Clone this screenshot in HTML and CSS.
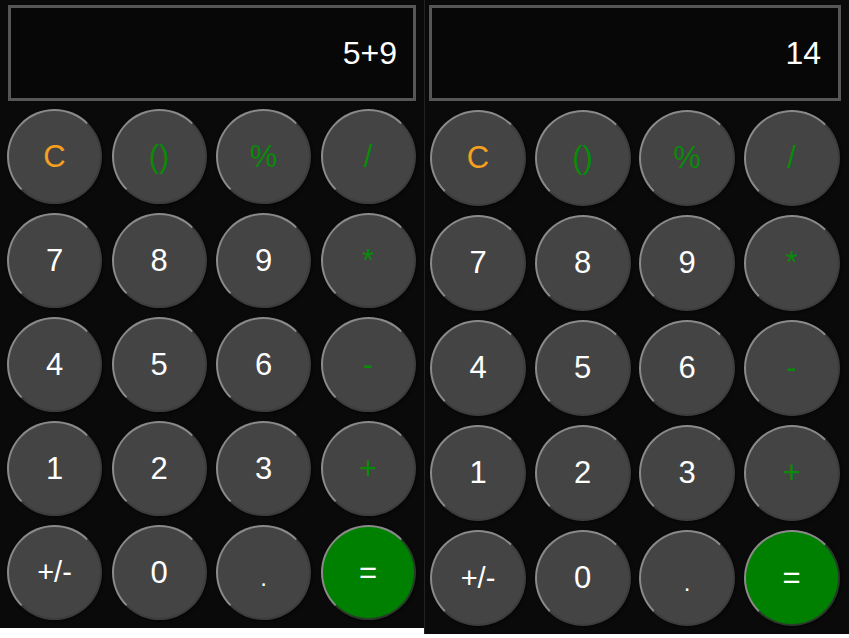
FILE: index.html
```html
<!DOCTYPE html>
<html lang="en">
<head>
<meta charset="utf-8">
<title>Calculator</title>
<link rel="stylesheet" href="styles.css">
</head>
<body>
<div class="shots">
  <section class="calc calc-left">
    <div class="display">5+9</div>
    <div class="keys">
      <button class="key clear">C</button>
      <button class="key op">()</button>
      <button class="key op">%</button>
      <button class="key op">/</button>
      <button class="key">7</button>
      <button class="key">8</button>
      <button class="key">9</button>
      <button class="key op">*</button>
      <button class="key">4</button>
      <button class="key">5</button>
      <button class="key">6</button>
      <button class="key op">-</button>
      <button class="key">1</button>
      <button class="key">2</button>
      <button class="key">3</button>
      <button class="key op">+</button>
      <button class="key small">+/-</button>
      <button class="key">0</button>
      <button class="key dot">.</button>
      <button class="key equals">=</button>
    </div>
  </section>
  <section class="calc calc-right">
    <div class="display">14</div>
    <div class="keys">
      <button class="key clear">C</button>
      <button class="key op">()</button>
      <button class="key op">%</button>
      <button class="key op">/</button>
      <button class="key">7</button>
      <button class="key">8</button>
      <button class="key">9</button>
      <button class="key op">*</button>
      <button class="key">4</button>
      <button class="key">5</button>
      <button class="key">6</button>
      <button class="key op">-</button>
      <button class="key">1</button>
      <button class="key">2</button>
      <button class="key">3</button>
      <button class="key op">+</button>
      <button class="key small">+/-</button>
      <button class="key">0</button>
      <button class="key dot">.</button>
      <button class="key equals">=</button>
    </div>
  </section>
</div>
</body>
</html>
```
FILE: styles.css
```css
* { box-sizing: border-box; }
html, body { margin: 0; padding: 0; background: #ffffff; }
body { font-family: "Liberation Sans", Arial, sans-serif; }

.shots {
  display: flex;
  align-items: flex-start;
}

.calc {
  background: #0a0a0a;
  display: flex;
  flex-direction: column;
}

.calc-left {
  width: 424px;
  height: 628px;
  padding: 5px 8px 0 7px;
}

.calc-right {
  width: 425px;
  height: 634px;
  padding: 5px 8px 0 4px;
  border-left: 1px solid #222;
}

.display {
  height: 96px;
  border: 3px solid #565656;
  background: #070707;
  color: #ffffff;
  font-size: 32px;
  display: flex;
  align-items: center;
  justify-content: flex-end;
  padding-right: 16px;
}

.calc-left .display { margin-left: 1px; }
.calc-right .display { padding-right: 17px; }

.keys {
  display: grid;
  grid-template-columns: repeat(4, 95px);
  grid-auto-rows: 95px;
  column-gap: 9.5px;
  row-gap: 9px;
  margin-top: 8px;
}

.calc-right .keys {
  grid-template-columns: repeat(4, 96px);
  grid-auto-rows: 96px;
  column-gap: 8.5px;
  row-gap: 9px;
  margin-top: 9px;
  margin-left: 1px;
}

.key {
  border-radius: 50%;
  background: #444444;
  color: #ffffff;
  font-family: "Liberation Sans", Arial, sans-serif;
  font-size: 31px;
  border: 2px solid;
  border-color: #8a8a8a #3c3c3c #3c3c3c #8a8a8a;
  box-shadow: 1px 1px 3px rgba(0, 0, 0, 0.6);
  padding: 0;
  display: flex;
  align-items: center;
  justify-content: center;
}

.clear { color: #f5a020; }
.op { color: #0a8a0a; }
.small { font-size: 29px; }
.dot { font-size: 24px; padding-top: 10px; }
.equals {
  background: #008000;
  color: #ffffff;
  border-color: #8a8a8a #2a3a2a #2a3a2a #8a8a8a;
}
```
